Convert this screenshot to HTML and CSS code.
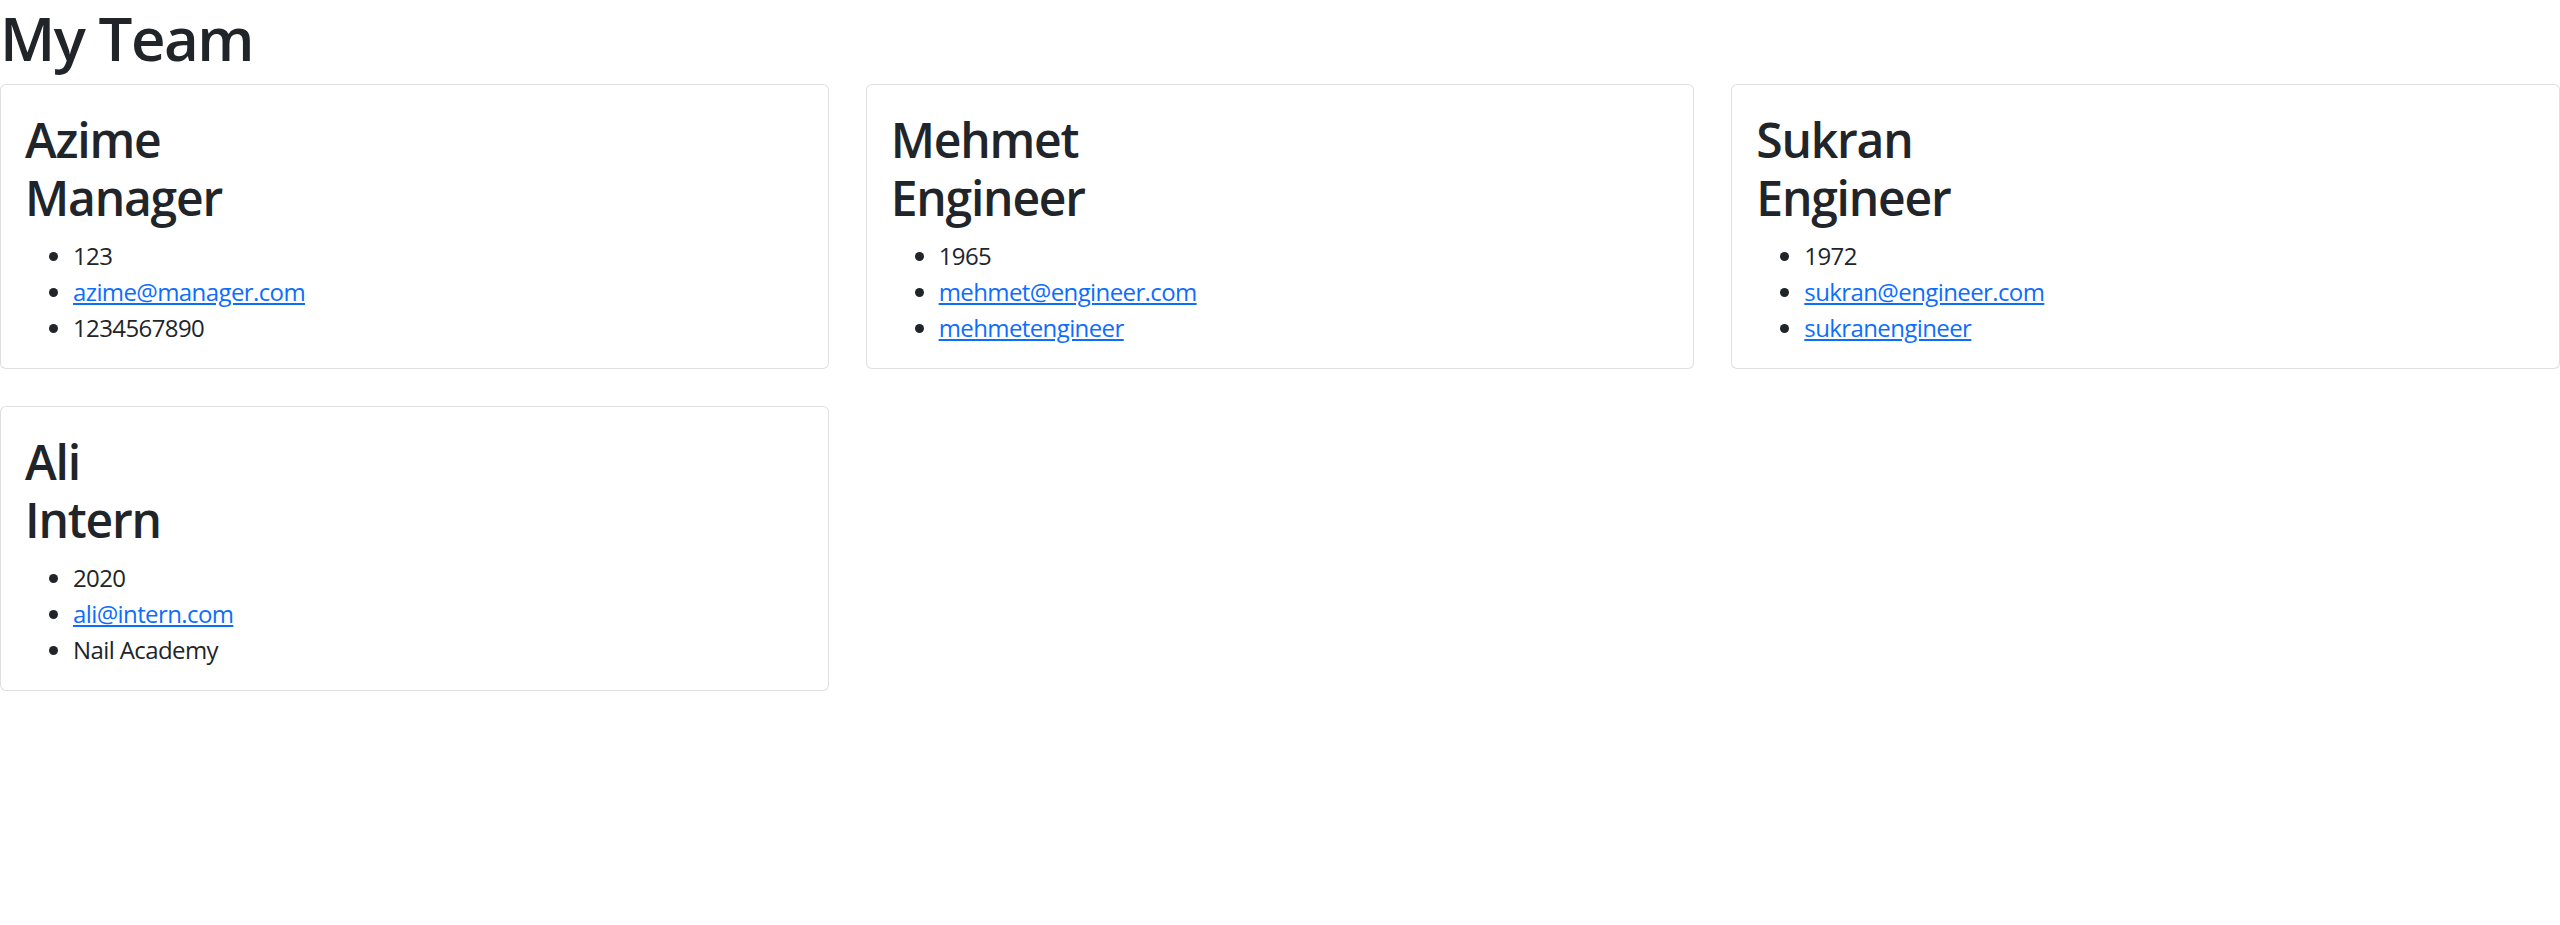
FILE: index.html
```html
<!DOCTYPE html>
<html lang="en">
<head>
<meta charset="utf-8">
<title>My Team</title>
<link rel="stylesheet" href="styles.css">
</head>
<body>
<h1 class="page-title">My Team</h1>
<div class="team-grid">
  <div class="card">
    <div class="card-body">
      <h2 class="card-title">Azime</h2>
      <h2 class="card-title">Manager</h2>
      <ul class="info-list">
        <li>123</li>
        <li><a href="#">azime@manager.com</a></li>
        <li>1234567890</li>
      </ul>
    </div>
  </div>
  <div class="card">
    <div class="card-body">
      <h2 class="card-title">Mehmet</h2>
      <h2 class="card-title">Engineer</h2>
      <ul class="info-list">
        <li>1965</li>
        <li><a href="#">mehmet@engineer.com</a></li>
        <li><a href="#">mehmetengineer</a></li>
      </ul>
    </div>
  </div>
  <div class="card">
    <div class="card-body">
      <h2 class="card-title">Sukran</h2>
      <h2 class="card-title">Engineer</h2>
      <ul class="info-list">
        <li>1972</li>
        <li><a href="#">sukran@engineer.com</a></li>
        <li><a href="#">sukranengineer</a></li>
      </ul>
    </div>
  </div>
  <div class="card">
    <div class="card-body">
      <h2 class="card-title">Ali</h2>
      <h2 class="card-title">Intern</h2>
      <ul class="info-list">
        <li>2020</li>
        <li><a href="#">ali@intern.com</a></li>
        <li>Nail Academy</li>
      </ul>
    </div>
  </div>
</div>
</body>
</html>
```

FILE: styles.css
```css
* {
  box-sizing: border-box;
}

body {
  margin: 0;
  font-family: "Open Sans", "Noto Sans", sans-serif;
  font-size: 24px;
  line-height: 1.5;
  color: #212529;
  background: #fff;
}

.page-title {
  margin: 0 0 12px 0;
  font-size: 60px;
  font-weight: 600;
  line-height: 1.2;
  letter-spacing: -1.5px;
  padding-top: 2px;
  height: 72px;
}

.team-grid {
  display: grid;
  grid-template-columns: repeat(3, 1fr);
  gap: 37px;
  align-items: start;
}

.card {
  border: 1px solid rgba(0, 0, 0, 0.125);
  border-radius: 6px;
  background: #fff;
}

.card-body {
  padding: 26px 24px 22px;
}

.card-title {
  margin: 0;
  font-size: 48px;
  font-weight: 600;
  line-height: 1.2;
  letter-spacing: -1.2px;
}

.card-title + .card-title {
  margin-bottom: 12px;
}

.info-list {
  margin: 0;
  padding-left: 48px;
  letter-spacing: -0.6px;
}

.info-list li::marker {
  letter-spacing: 0;
}

.info-list a {
  color: #0d6efd;
  text-decoration: underline;
}
```
